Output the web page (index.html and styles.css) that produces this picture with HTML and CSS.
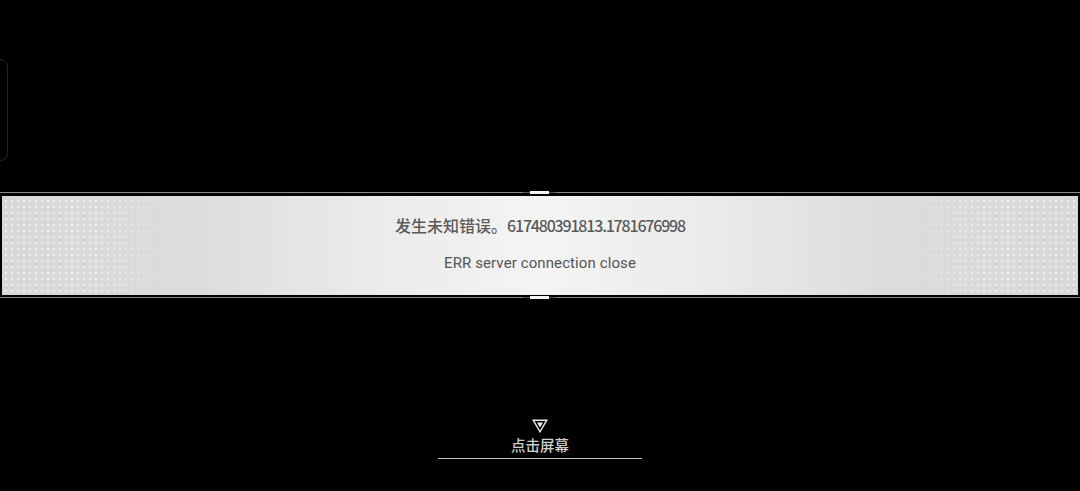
FILE: index.html
```html
<!DOCTYPE html>
<html lang="zh">
<head>
<meta charset="utf-8">
<link rel="stylesheet" href="styles.css">
</head>
<body>
<div class="screen">
  <div class="side-frame"></div>
  <div class="banner">
    <div class="rule rule-top"><span class="tab"></span></div>
    <div class="panel">
      <div class="dots dots-left"></div>
      <div class="dots dots-right"></div>
      <p class="msg msg-main">发生未知错误。<span class="num">617480391813.1781676998</span></p>
      <p class="msg msg-sub">ERR server connection close</p>
    </div>
    <div class="rule rule-bottom"><span class="tab"></span></div>
  </div>
  <div class="prompt">
    <svg class="tri" width="16" height="14" viewBox="0 0 16 14">
      <path d="M1.2 1.2 H14.8 L8 12.8 Z" fill="none" stroke="#e8e8e8" stroke-width="1.4" stroke-linejoin="miter"/>
      <path d="M5 3.6 H11 L8 8.6 Z" fill="#f2f2f2"/>
    </svg>
    <span class="prompt-text">点击屏幕</span>
    <span class="prompt-line"></span>
  </div>
</div>
</body>
</html>
```
FILE: styles.css
```css
html, body {
  margin: 0;
  padding: 0;
  background: #000;
}
.screen {
  position: relative;
  width: 1080px;
  height: 491px;
  display: flex;
  flex-direction: column;
  overflow: hidden;
  font-family: "Noto Sans CJK SC", "Noto Sans", sans-serif;
}
.side-frame {
  position: absolute;
  left: -12px;
  top: 59px;
  width: 18px;
  height: 100px;
  border: 1px solid #262626;
  border-radius: 8px;
}
.banner {
  margin-top: 192px;
  display: flex;
  flex-direction: column;
}
.rule {
  position: relative;
  height: 1px;
  background: #8a8a8a;
}
.rule .tab {
  position: absolute;
  left: 530px;
  top: -1px;
  width: 19px;
  height: 3px;
  background: #f4f4f4;
  box-shadow: -8px 0 0 -1px #555, 8px 0 0 -1px #555;
}
.rule-top { margin-bottom: 3px; }
.rule-bottom { margin-top: 2px; }
.panel {
  position: relative;
  margin: 0 2px;
  height: 99px;
  background: linear-gradient(90deg, #d8d8d8 0%, #dcdcdc 18%, #e9e9e9 32%, #f4f4f4 50%, #e9e9e9 68%, #dcdcdc 82%, #d8d8d8 100%);
  display: flex;
  flex-direction: column;
  align-items: center;
}
.dots {
  position: absolute;
  top: 0;
  bottom: 0;
  width: 170px;
  background-image: radial-gradient(circle, rgba(255,255,255,0.6) 0.8px, transparent 1.3px);
  background-size: 6px 6px;
  background-position: 1px 2px;
}
.dots-left {
  left: 0;
  -webkit-mask-image: linear-gradient(90deg, #000 0%, #000 55%, transparent 100%);
  mask-image: linear-gradient(90deg, #000 0%, #000 55%, transparent 100%);
}
.dots-right {
  right: 0;
  -webkit-mask-image: linear-gradient(270deg, #000 0%, #000 55%, transparent 100%);
  mask-image: linear-gradient(270deg, #000 0%, #000 55%, transparent 100%);
}
.msg {
  position: relative;
  margin: 0;
  color: #555;
  white-space: nowrap;
}
.msg-main {
  margin-top: 18px;
  font-size: 16px;
  font-weight: 500;
  color: #5a5a5a;
  line-height: 22px;
}
.num {
  letter-spacing: -1.2px;
}
.msg-sub {
  margin-top: 17px;
  font-family: Roboto, "Noto Sans", sans-serif;
  font-size: 15px;
  letter-spacing: 0.1px;
  line-height: 20px;
}
.prompt {
  margin-top: 121px;
  display: flex;
  flex-direction: column;
  align-items: center;
}
.tri {
  display: block;
}
.prompt-text {
  margin-top: 2px;
  color: #cfcfcf;
  font-size: 14.5px;
  font-weight: 500;
  line-height: 20px;
}
.prompt-line {
  margin-top: 3px;
  width: 204px;
  height: 1px;
  background: #bdbdbd;
}
```
